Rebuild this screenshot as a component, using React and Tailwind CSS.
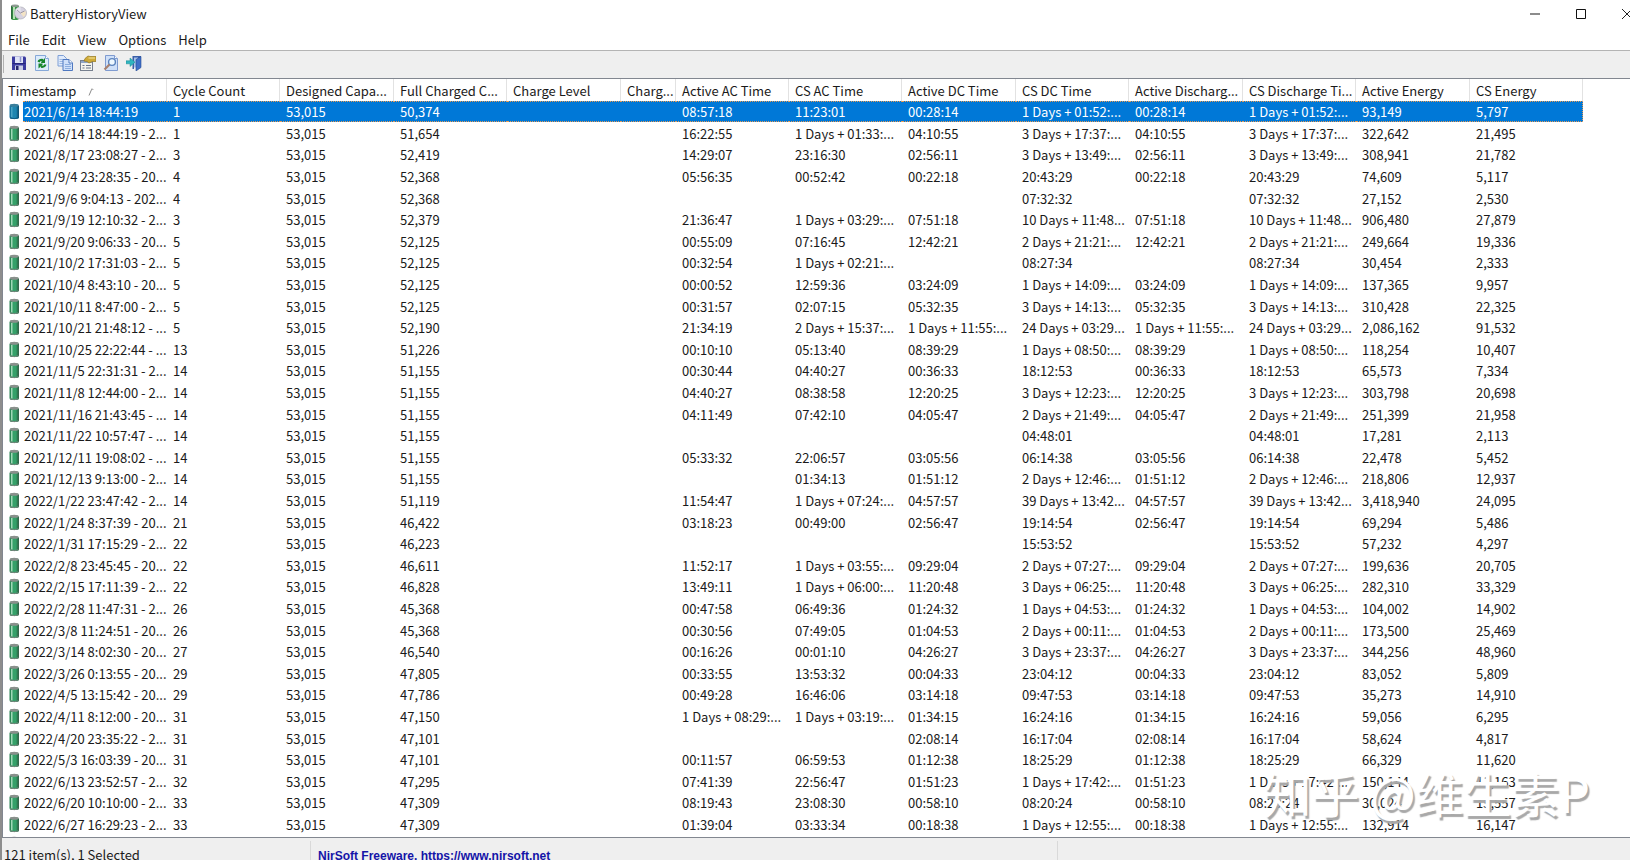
const menus = ['File', 'Edit', 'View', 'Options', 'Help'];

const columns = [
  { label: 'Timestamp', width: 'w-[164px]' },
  { label: 'Cycle Count', width: 'w-[113px]' },
  { label: 'Designed Capa...', width: 'w-[114px]' },
  { label: 'Full Charged C...', width: 'w-[113px]' },
  { label: 'Charge Level', width: 'w-[114px]' },
  { label: 'Charg...', width: 'w-[55px]' },
  { label: 'Active AC Time', width: 'w-[113px]' },
  { label: 'CS AC Time', width: 'w-[113px]' },
  { label: 'Active DC Time', width: 'w-[114px]' },
  { label: 'CS DC Time', width: 'w-[113px]' },
  { label: 'Active Discharg...', width: 'w-[114px]' },
  { label: 'CS Discharge Ti...', width: 'w-[113px]' },
  { label: 'Active Energy', width: 'w-[114px]' },
  { label: 'CS Energy', width: 'w-[113px]' },
];

const DESIGNED = '53,015';

// timestamp, cycles, full charge, active AC, CS AC, active DC, CS DC, active energy, CS energy
const records = [
  ['2021/6/14 18:44:19', '1', '50,374', '08:57:18', '11:23:01', '00:28:14', '1 Days + 01:52:...', '93,149', '5,797'],
  ['2021/6/14 18:44:19 - 2...', '1', '51,654', '16:22:55', '1 Days + 01:33:...', '04:10:55', '3 Days + 17:37:...', '322,642', '21,495'],
  ['2021/8/17 23:08:27 - 2...', '3', '52,419', '14:29:07', '23:16:30', '02:56:11', '3 Days + 13:49:...', '308,941', '21,782'],
  ['2021/9/4 23:28:35 - 20...', '4', '52,368', '05:56:35', '00:52:42', '00:22:18', '20:43:29', '74,609', '5,117'],
  ['2021/9/6 9:04:13 - 202...', '4', '52,368', '', '', '', '07:32:32', '27,152', '2,530'],
  ['2021/9/19 12:10:32 - 2...', '3', '52,379', '21:36:47', '1 Days + 03:29:...', '07:51:18', '10 Days + 11:48...', '906,480', '27,879'],
  ['2021/9/20 9:06:33 - 20...', '5', '52,125', '00:55:09', '07:16:45', '12:42:21', '2 Days + 21:21:...', '249,664', '19,336'],
  ['2021/10/2 17:31:03 - 2...', '5', '52,125', '00:32:54', '1 Days + 02:21:...', '', '08:27:34', '30,454', '2,333'],
  ['2021/10/4 8:43:10 - 20...', '5', '52,125', '00:00:52', '12:59:36', '03:24:09', '1 Days + 14:09:...', '137,365', '9,957'],
  ['2021/10/11 8:47:00 - 2...', '5', '52,125', '00:31:57', '02:07:15', '05:32:35', '3 Days + 14:13:...', '310,428', '22,325'],
  ['2021/10/21 21:48:12 - ...', '5', '52,190', '21:34:19', '2 Days + 15:37:...', '1 Days + 11:55:...', '24 Days + 03:29...', '2,086,162', '91,532'],
  ['2021/10/25 22:22:44 - ...', '13', '51,226', '00:10:10', '05:13:40', '08:39:29', '1 Days + 08:50:...', '118,254', '10,407'],
  ['2021/11/5 22:31:31 - 2...', '14', '51,155', '00:30:44', '04:40:27', '00:36:33', '18:12:53', '65,573', '7,334'],
  ['2021/11/8 12:44:00 - 2...', '14', '51,155', '04:40:27', '08:38:58', '12:20:25', '3 Days + 12:23:...', '303,798', '20,698'],
  ['2021/11/16 21:43:45 - ...', '14', '51,155', '04:11:49', '07:42:10', '04:05:47', '2 Days + 21:49:...', '251,399', '21,958'],
  ['2021/11/22 10:57:47 - ...', '14', '51,155', '', '', '', '04:48:01', '17,281', '2,113'],
  ['2021/12/11 19:08:02 - ...', '14', '51,155', '05:33:32', '22:06:57', '03:05:56', '06:14:38', '22,478', '5,452'],
  ['2021/12/13 9:13:00 - 2...', '14', '51,155', '', '01:34:13', '01:51:12', '2 Days + 12:46:...', '218,806', '12,937'],
  ['2022/1/22 23:47:42 - 2...', '14', '51,119', '11:54:47', '1 Days + 07:24:...', '04:57:57', '39 Days + 13:42...', '3,418,940', '24,095'],
  ['2022/1/24 8:37:39 - 20...', '21', '46,422', '03:18:23', '00:49:00', '02:56:47', '19:14:54', '69,294', '5,486'],
  ['2022/1/31 17:15:29 - 2...', '22', '46,223', '', '', '', '15:53:52', '57,232', '4,297'],
  ['2022/2/8 23:45:45 - 20...', '22', '46,611', '11:52:17', '1 Days + 03:55:...', '09:29:04', '2 Days + 07:27:...', '199,636', '20,705'],
  ['2022/2/15 17:11:39 - 2...', '22', '46,828', '13:49:11', '1 Days + 06:00:...', '11:20:48', '3 Days + 06:25:...', '282,310', '33,329'],
  ['2022/2/28 11:47:31 - 2...', '26', '45,368', '00:47:58', '06:49:36', '01:24:32', '1 Days + 04:53:...', '104,002', '14,902'],
  ['2022/3/8 11:24:51 - 20...', '26', '45,368', '00:30:56', '07:49:05', '01:04:53', '2 Days + 00:11:...', '173,500', '25,469'],
  ['2022/3/14 8:02:30 - 20...', '27', '46,540', '00:16:26', '00:01:10', '04:26:27', '3 Days + 23:37:...', '344,256', '48,960'],
  ['2022/3/26 0:13:55 - 20...', '29', '47,805', '00:33:55', '13:53:32', '00:04:33', '23:04:12', '83,052', '5,809'],
  ['2022/4/5 13:15:42 - 20...', '29', '47,786', '00:49:28', '16:46:06', '03:14:18', '09:47:53', '35,273', '14,910'],
  ['2022/4/11 8:12:00 - 20...', '31', '47,150', '1 Days + 08:29:...', '1 Days + 03:19:...', '01:34:15', '16:24:16', '59,056', '6,295'],
  ['2022/4/20 23:35:22 - 2...', '31', '47,101', '', '', '02:08:14', '16:17:04', '58,624', '4,817'],
  ['2022/5/3 16:03:39 - 20...', '31', '47,101', '00:11:57', '06:59:53', '01:12:38', '18:25:29', '66,329', '11,620'],
  ['2022/6/13 23:52:57 - 2...', '32', '47,295', '07:41:39', '22:56:47', '01:51:23', '1 Days + 17:42:...', '150,144', '11,163'],
  ['2022/6/20 10:10:00 - 2...', '33', '47,309', '08:19:43', '23:08:30', '00:58:10', '08:20:24', '30,024', '15,557'],
  ['2022/6/27 16:29:23 - 2...', '33', '47,309', '01:39:04', '03:33:34', '00:18:38', '1 Days + 12:55:...', '132,914', '16,147'],
];

function toCells([, cycles, full, activeAc, csAc, activeDc, csDc, activeEnergy, csEnergy]) {
  // discharge times always equal the DC times
  return [cycles, DESIGNED, full, '', '', activeAc, csAc, activeDc, csDc, activeDc, csDc, activeEnergy, csEnergy];
}

function AppIcon() {
  return (
    <svg width="18" height="18" viewBox="0 0 18 18">
      <rect x="2" y="1" width="8" height="15" rx="2" fill="#3d9a4c" />
      <rect x="4" y="2" width="2" height="13" fill="#b4e3b3" />
      <rect x="2" y="2" width="1.5" height="13" fill="#2b6e3c" />
      <ellipse cx="6" cy="1.800" rx="3.600" ry="1.200" fill="#8f9a92" />
      <circle cx="11.500" cy="9" r="6" fill="#d5d2e0" stroke="#b3b1bb" strokeWidth=".8" />
      <path d="M11.500 9L6.500 6A6 6 0 0 1 11.500 3z" fill="#e9e7ef" />
      <path d="M11.500 9l5-2a5.600 5.600 0 0 1-2 6z" fill="#f3e3c4" />
      <path d="M11.500 9L8 6M11.500 9l4-2" stroke="#8b8798" strokeWidth=".8" fill="none" />
    </svg>
  );
}

function BatteryIcon({ selected }) {
  return (
    <svg width="12" height="17" viewBox="0 0 12 17" className="shrink-0">
      <rect x="1.5" y="1.5" width="9.500" height="14.500" rx="2" fill={selected ? '#17749f' : '#2c8656'} />
      <rect x="4" y="3" width="4.500" height="12" fill={selected ? '#1f86b0' : '#35a069'} />
      <rect x="3" y="4" width="1.500" height="10.500" fill={selected ? '#4ba3c4' : '#9fd8b6'} />
      <rect x="9.500" y="3" width="1.500" height="12" fill={selected ? '#105577' : '#35694c'} />
      <ellipse cx="6.200" cy="2.300" rx="4.400" ry="1.500" fill={selected ? '#3b7f9c' : '#8a8f8c'} />
      <path d="M2 14.800q4.200 1.800 8.400 0" stroke={selected ? '#135a80' : '#7b8680'} fill="none" />
    </svg>
  );
}

function SaveIcon() {
  return (
    <svg width="16" height="16" viewBox="0 0 16 16">
      <path d="M1 1.500h13l1 1V15H1z" fill="#3c3ca0" />
      <rect x="4" y="1.500" width="8" height="6.500" fill="#dfe3f6" />
      <path d="M9.500 2v5" stroke="#8f93cc" strokeWidth="1.500" />
      <path d="M1.500 8.500h13" stroke="#26267a" />
      <rect x="4" y="10.500" width="8" height="4.500" fill="#c9cde6" />
      <rect x="5" y="11" width="2.500" height="4" fill="#25256c" />
    </svg>
  );
}

function RefreshIcon() {
  return (
    <svg width="16" height="16" viewBox="0 0 16 16">
      <path d="M1.500.500h10l3 3v12h-13z" fill="#dcebfb" stroke="#86a8d8" />
      <path d="M11.500.500v3h3" fill="#ffffff" stroke="#86a8d8" />
      <path d="M4.500 7q1-2.500 4.500-2" stroke="#16852b" strokeWidth="2.200" fill="none" />
      <path d="M7.500 6.500l3.500-3.500v5h-4z" fill="#16852b" />
      <path d="M11.500 9.500q-1 2.800-4.500 2.200" stroke="#16852b" strokeWidth="2.200" fill="none" />
      <path d="M8.500 10L4.500 13.500v-5h4z" fill="#16852b" />
    </svg>
  );
}

function CopyIcon() {
  return (
    <svg width="16" height="16" viewBox="0 0 16 16">
      <path d="M1 .5h5.500l3 3V11H1z" fill="#dfeafb" stroke="#7e9fd6" />
      <path d="M2.500 4.500h4M2.500 6.500h5M2.500 8.500h5" stroke="#9db9e4" />
      <path d="M6 4.500h6l3.500 3.500v7.500H6z" fill="#cfe0fa" stroke="#4f78c0" />
      <path d="M12 4.500V8h3.500" fill="#fff" stroke="#4f78c0" />
      <path d="M8 9.500h6M8 11.500h6M8 13.500h6" stroke="#8cadde" />
    </svg>
  );
}

function PropertiesIcon() {
  return (
    <svg width="16" height="16" viewBox="0 0 16 16">
      <rect x=".5" y="5.500" width="12" height="10" fill="#f4f4ee" stroke="#77808f" />
      <rect x="1" y="6" width="11" height="2" fill="#8fa5c8" />
      <path d="M2.500 10.500h2M6 10.500h5M2.500 13h2M6 13h5" stroke="#6a768a" />
      <path d="M5 3.500l3-2.500 2 .5h6V6.500h-3.500L9 8 7 6.500 4 6z" fill="#cfaa38" stroke="#93771f" strokeWidth=".7" />
      <path d="M8.500 3h6.500" stroke="#f6e59a" />
    </svg>
  );
}

function FindIcon() {
  return (
    <svg width="16" height="16" viewBox="0 0 16 16">
      <path d="M2.500.500h9l3 3v12h-12z" fill="#cfe0f8" stroke="#7f9bd0" />
      <path d="M11.500.500v3h3" fill="#fff" stroke="#7f9bd0" />
      <circle cx="9" cy="7" r="3.400" fill="#eef8ff" stroke="#5b83bd" strokeWidth="1.400" />
      <path d="M6.500 9.500L1.500 14.500" stroke="#a8806e" strokeWidth="2.200" />
    </svg>
  );
}

function ExitIcon() {
  return (
    <svg width="16" height="16" viewBox="0 0 16 16">
      <path d="M6.500 1H15v2L8 3v11H6.500z" fill="#3b5fa8" />
      <path d="M8 2.500h4v10H8z" fill="#a9c3ea" />
      <path d="M10 4.500L15 1.500v11l-5 3.500z" fill="#3f70c8" stroke="#274b94" strokeWidth=".6" />
      <path d="M0 5.800h4V3l5 4.200-5 4.300V8.800H0z" fill="#2fb6c0" stroke="#1d8790" strokeWidth=".5" />
    </svg>
  );
}

const tools = [
  { name: 'Save', Icon: SaveIcon },
  { name: 'Refresh', Icon: RefreshIcon },
  { name: 'Copy', Icon: CopyIcon },
  { name: 'Properties', Icon: PropertiesIcon },
  { name: 'Find', Icon: FindIcon },
  { name: 'Exit', Icon: ExitIcon },
];

function TitleBar() {
  return (
    <header className="flex h-7 shrink-0 items-start pl-[7px]">
      <div className="pt-1">
        <AppIcon />
      </div>
      <h1 className="ml-[3px] flex-1 pt-[3px]">BatteryHistoryView</h1>
      <div className="-mr-[20px] flex h-full">
        <button aria-label="Minimize" className="flex w-[46px] items-center justify-center">
          <svg width="10" height="10" viewBox="0 0 10 10"><path d="M0 5h10" stroke="#666" strokeWidth="1.500" /></svg>
        </button>
        <button aria-label="Maximize" className="flex w-[46px] items-center justify-center">
          <svg width="10" height="10" viewBox="0 0 10 10"><path d="M.5.500h9v9h-9z" fill="none" stroke="#111" /></svg>
        </button>
        <button aria-label="Close" className="flex w-[46px] items-center justify-center">
          <svg width="10" height="10" viewBox="0 0 10 10"><path d="M0 0l10 10M10 0L0 10" stroke="#222" /></svg>
        </button>
      </div>
    </header>
  );
}

function HistoryRow({ record, selected }) {
  return (
    <tr
      className={`h-[22px] nth-[5n+1]:h-[21px] nth-[5n+3]:h-[21px] ${selected ? 'text-white' : ''}`}
      aria-selected={selected}
    >
      <td className="p-0">
        <div className="flex h-[21px] items-center pl-[5px]">
          <BatteryIcon selected={selected} />
          <span
            className={`ml-[3px] flex-1 pl-px ${selected ? 'border-y border-dotted border-[#e79b55] bg-[#0078d7] leading-[19px]' : ''}`}
          >
            {record[0]}
          </span>
        </div>
      </td>
      {toCells(record).map((cell, i) => (
        <td
          key={i}
          className={`p-0 pl-[6px] ${selected ? 'border-y border-dotted border-[#e79b55] bg-[#0078d7] leading-[19px] last:border-r' : ''}`}
        >
          {cell}
        </td>
      ))}
    </tr>
  );
}

function HistoryTable() {
  return (
    <table className="table-fixed w-[1580px] border-separate border-spacing-0 text-left leading-[21px] whitespace-nowrap">
      <thead>
        <tr className="h-[22px]">
          {columns.map(({ label, width }, i) => (
            <th
              key={label}
              scope="col"
              className={`border-r border-[#e2e2e2] p-0 font-normal ${i === 0 ? 'pl-[5px]' : 'pl-[6px]'} ${width}`}
            >
              {label}
              {i === 0 && (
                <svg width="6" height="8" viewBox="0 0 6 8" className="ml-3 inline">
                  <path d="M1 7.500L4 .5" stroke="#8a8a8a" />
                  <path d="M3.500 1.500h2" stroke="#b5b5b5" />
                </svg>
              )}
            </th>
          ))}
        </tr>
      </thead>
      <tbody>
        {records.map((record, i) => (
          <HistoryRow key={i} record={record} selected={i === 0} />
        ))}
        <tr>
          <td className="p-0 pt-px pl-[5px]" colSpan={14}>
            <BatteryIcon />
          </td>
        </tr>
      </tbody>
    </table>
  );
}

export default function App() {
  return (
    <div className="relative flex h-screen flex-col overflow-hidden border-l-2 border-[#8d8d8d] bg-white font-['Noto_Sans_CJK_SC','Noto_Sans',sans-serif] text-[13px] leading-[21px] text-[#1a1a1a]">
      <TitleBar />

      <nav className="flex h-[22px] shrink-0 items-center gap-3 pl-[6px]">
        {menus.map((menu) => (
          <button key={menu}>{menu}</button>
        ))}
      </nav>

      <div className="flex h-7 shrink-0 items-start gap-[7px] border-t border-[#b4b4b4] bg-[#efefef] pt-1 pl-px">
        <div className="h-[18px] w-px bg-[#b0b0b0]" />
        {tools.map(({ name, Icon }) => (
          <button key={name} aria-label={name} title={name}>
            <Icon />
          </button>
        ))}
      </div>

      <main className="min-h-0 flex-1 overflow-hidden border-y border-l border-[#828790] bg-white">
        <HistoryTable />
      </main>

      <footer className="flex h-[22px] shrink-0 bg-[#efefef] pt-[3px]">
        <div className="w-[309px] shrink-0 border-r border-[#d9d9d9] pt-[3px] pl-[2px]">121 item(s), 1 Selected</div>
        <div className="flex-1 border-r border-[#d9d9d9] pt-[3px] pl-[7px]">
          <a
            href="https://www.nirsoft.net"
            className="font-['Liberation_Sans',sans-serif] text-[12px] font-bold text-[#1414a8]"
          >
            NirSoft Freeware. https://www.nirsoft.net
          </a>
        </div>
        <div className="w-[572px] shrink-0" />
      </footer>

      <div className="pointer-events-none absolute right-10 bottom-9 text-[48px] leading-[64px] whitespace-pre text-white [text-shadow:2px_3px_1px_#a8a8a8]">
        知乎 @维生素P
      </div>
    </div>
  );
}
